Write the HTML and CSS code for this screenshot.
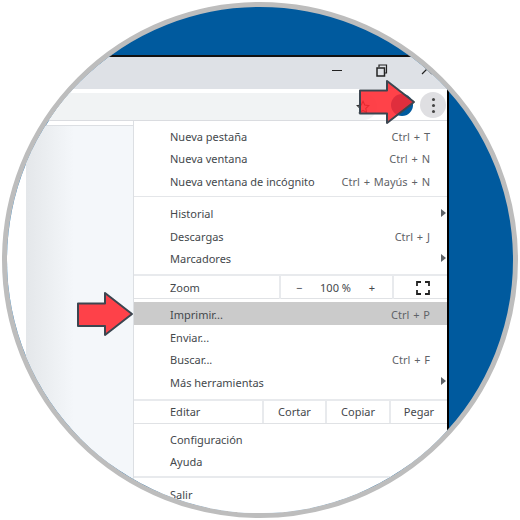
FILE: index.html
```html
<!DOCTYPE html>
<html lang="es">
<head>
  <meta charset="UTF-8" />
  <title>Menú de Chrome</title>
  <link rel="stylesheet" href="styles.css">
</head>
<body>
  <div class="lens">
    <div class="window">
      <div class="titlebar">
        <svg class="controls" width="110" height="24" viewBox="0 0 110 24">
          <path d="M0 12.500h10" stroke="#222" stroke-width="1.200" fill="none"/>
          <path d="M45 10h7.500v8h-7.500z" stroke="#222" stroke-width="1.500" fill="none"/>
          <path d="M47 9v-2h7.500v8h-1.500" stroke="#222" stroke-width="1.200" fill="none"/>
          <path d="M90 16l10-10M90 6l10 10" stroke="#222" stroke-width="1.200" fill="none"/>
        </svg>
      </div>
      <div class="toolbar">
        <div class="omnibox">
          <svg class="star" width="14" height="14" viewBox="0 0 16 16">
            <path d="M8 1.500l2 4.300 4.600.6-3.400 3.200.9 4.600L8 11.900l-4.100 2.300.9-4.600L1.400 6.400 6 5.800z" fill="none" stroke="#333" stroke-width="1.300"/>
          </svg>
        </div>
        <div class="avatar"></div>
        <div class="dots"><span></span><span></span><span></span></div>
      </div>
      <div class="page">
        <div class="strip"></div>
        <div class="panel"></div>
        <div class="menu">
          <div class="group first">
            <div class="item"><span>Nueva pestaña</span><span class="key">Ctrl + T</span></div>
            <div class="item"><span>Nueva ventana</span><span class="key">Ctrl + N</span></div>
            <div class="item"><span>Nueva ventana de incógnito</span><span class="key">Ctrl + Mayús + N</span></div>
          </div>
          <div class="group second">
            <div class="item"><span>Historial</span><i class="sub"></i></div>
            <div class="item"><span>Descargas</span><span class="key">Ctrl + J</span></div>
            <div class="item"><span>Marcadores</span><i class="sub"></i></div>
          </div>
          <div class="zoom-row">
            <span class="label">Zoom</span>
            <div class="zoom-controls"><span>−</span><span>100 %</span><span>+</span></div>
            <div class="zoom-full">
              <svg width="14" height="14" viewBox="0 0 14 14">
                <path d="M1 5V1h4M9 1h4v4M13 9v4H9M5 13H1V9" fill="none" stroke="#222" stroke-width="1.800"/>
              </svg>
            </div>
          </div>
          <div class="group third">
            <div class="item active"><span>Imprimir...</span><span class="key">Ctrl + P</span></div>
            <div class="item"><span>Enviar...</span></div>
            <div class="item"><span>Buscar...</span><span class="key">Ctrl + F</span></div>
            <div class="item"><span>Más herramientas</span><i class="sub"></i></div>
          </div>
          <div class="edit-row">
            <span class="label">Editar</span>
            <span class="cell">Cortar</span>
            <span class="cell">Copiar</span>
            <span class="cell">Pegar</span>
          </div>
          <div class="group fourth">
            <div class="item"><span>Configuración</span></div>
            <div class="item"><span>Ayuda</span></div>
          </div>
          <div class="group fifth">
            <div class="item"><span>Salir</span></div>
          </div>
        </div>
      </div>
    </div>

    <svg class="arrow arrow-top" width="60" height="46" viewBox="0 0 60 46">
      <path d="M2 11.500h27V2l27 21-27 21V34.500H2z" />
    </svg>
    <svg class="arrow arrow-print" width="60" height="46" viewBox="0 0 60 46">
      <path d="M2 12.500h27V2l27 21-27 21V35H2z" />
    </svg>
  </div>
</body>
</html>
```

FILE: styles.css
```css
* {
  box-sizing: border-box;
}
html, body {
  height: 520px;
  overflow: hidden;
}
body {
  margin: 0;
  padding: 2px;
  background: #fff;
  font-family: "Noto Sans", "Open Sans", sans-serif;
  font-size: 11px;
  color: #44484c;
}
.lens {
  position: relative;
  display: flex;
  width: 516px;
  height: 516px;
  padding: 48px 64px 0 0;
  border: 5px solid #bdbdbd;
  border-radius: 50%;
  background: #005a9e;
  overflow: hidden;
}
.window {
  flex: 1;
  min-width: 0;
  height: 520px;
  border-top: 2px solid #111;
  border-right: 2px solid #000;
  background: #fff;
}
.titlebar {
  display: flex;
  justify-content: flex-end;
  align-items: center;
  height: 32px;
  padding: 0 5px 6px 0;
  background: #dee1e6;
}
.toolbar {
  position: relative;
  height: 32px;
  padding-top: 4px;
  background: #fff;
  border-bottom: 1px solid #dadce0;
}
.omnibox {
  display: flex;
  justify-content: flex-end;
  align-items: center;
  width: 370px;
  height: 27px;
  padding-right: 7px;
  border-radius: 0 14px 14px 0;
  background: #f1f3f4;
}
.avatar {
  position: absolute;
  left: 384px;
  top: 5px;
  width: 22px;
  height: 22px;
  border-radius: 50%;
  background: #005a9e;
}
.dots {
  position: absolute;
  left: 413px;
  top: 3px;
  display: flex;
  flex-direction: column;
  align-items: center;
  justify-content: center;
  gap: 3px;
  width: 26px;
  height: 26px;
  border-radius: 50%;
  background: #dfdfe2;
}
.dots span {
  width: 3px;
  height: 3px;
  border-radius: 50%;
  background: #444;
}
.page {
  display: flex;
  height: 420px;
}
.strip {
  width: 19px;
}
.panel {
  width: 107px;
  margin-top: 4px;
  border-top: 1px solid #dcdfe3;
  background: linear-gradient(90deg, #e4e7ea, #f4f7fa 45%);
}
.menu {
  flex: 1;
  min-width: 0;
  border-left: 1px solid #dcdfe3;
  background: #fff;
}
.group {
  border-bottom: 1px solid #e4e6e9;
}
.first {
  padding: 4px 0 3px;
}
.second {
  padding: 5.500px 0 4.500px;
  border-bottom: 2px solid #e8eaed;
}
.third {
  padding: 3px 0 6px;
  border-top: 1px solid #e0e2e5;
  border-bottom: 2px solid #e8eaed;
}
.fourth {
  padding: 5px 0 3.500px;
  border-bottom: 2px solid #e8eaed;
}
.fifth {
  padding: 5px 0 0;
  border-bottom: 0;
}
.item {
  display: flex;
  justify-content: space-between;
  align-items: center;
  position: relative;
  height: 22.500px;
  padding: 0 17px 0 36px;
}
.second .item:nth-child(2) {
  padding-top: 2px;
}
.third .item {
  padding-top: 2px;
}
.fourth .item {
  height: 22px;
}
.item.active {
  margin-bottom: 0.500px;
  background: #cbcbcb;
}
.key {
  color: #5f6368;
  word-spacing: 1px;
}
.sub {
  position: absolute;
  right: 1px;
  top: 7px;
  border-left: 5px solid #5f6368;
  border-top: 4px solid transparent;
  border-bottom: 4px solid transparent;
}
.zoom-row, .edit-row {
  display: grid;
  align-items: stretch;
}
.zoom-row {
  grid-template-columns: 145px 113px 1fr;
  height: 22px;
  line-height: 23px;
}
.edit-row {
  grid-template-columns: 128px 63px 64px 1fr;
  height: 23px;
  line-height: 22px;
  border-bottom: 1px solid #e0e2e5;
}
.label {
  padding-left: 36px;
}
.zoom-controls {
  display: flex;
  justify-content: space-between;
  padding: 0 17px 0 15px;
  border-left: 2px solid #e8eaed;
}
.zoom-full {
  display: flex;
  justify-content: center;
  align-items: center;
  padding-left: 5px;
  border-left: 2px solid #e8eaed;
}
.cell {
  text-align: center;
  border-left: 2px solid #e8eaed;
}
.arrow {
  position: absolute;
}
.arrow path {
  fill: rgba(255, 40, 48, 0.88);
  stroke: #3c4650;
  stroke-width: 2;
  stroke-linejoin: round;
}
.arrow-top {
  left: 351px;
  top: 72px;
}
.arrow-print {
  left: 69px;
  top: 284px;
}
```
